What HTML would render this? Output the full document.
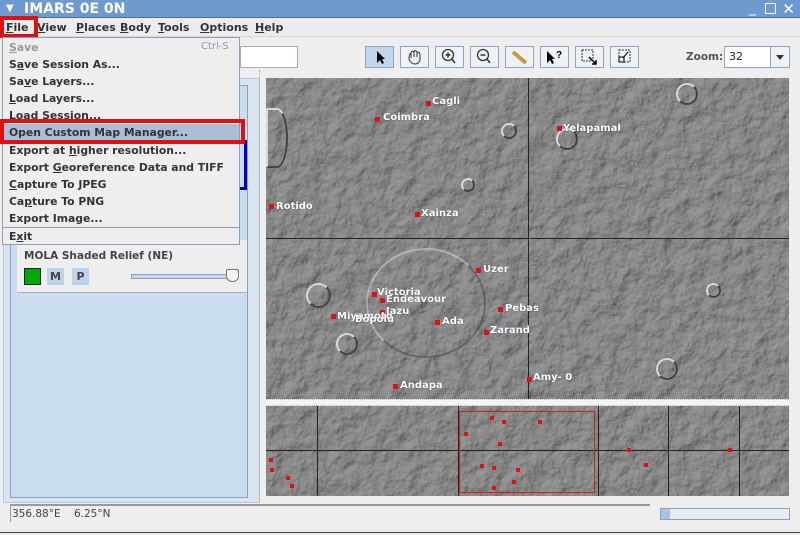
<!DOCTYPE html>
<html><head><meta charset="utf-8"><style>
*{margin:0;padding:0;box-sizing:border-box}
body{width:800px;height:535px;overflow:hidden;background:#eeeeee;font-family:"DejaVu Sans","Liberation Sans",sans-serif;font-size:11px;position:relative;color:#222}
.abs{position:absolute}
.title{left:0;top:0;width:800px;height:18px;background:#6f9ad0;color:#fff;font-weight:bold;font-size:14px;line-height:18px;padding-left:24px;border-bottom:1px solid #4a6e9c}
.menubar{left:0;top:18px;width:800px;height:19px;background:#ececec;border-bottom:1px solid #d8d8d8}
.menubar span{position:absolute;top:3px;font-weight:bold;color:#333;font-size:11px}
.menu{left:2px;top:37px;width:238px;height:208px;background:#eeeeee;border:1px solid #8aa0bd}
.mi{position:absolute;left:6px;font-weight:bold;font-size:10.8px;color:#333}
.map{background:#8e8e8e;overflow:hidden}
.lbl{position:absolute;color:#fff;font-weight:bold;font-size:10px;text-shadow:0 0 1px #333}
.dot{position:absolute;width:5px;height:5px;background:#e01010}
.crater{position:absolute;border-radius:50%;border:2px solid #d8d8d8;border-right-color:#444;border-bottom-color:#444}
.tb{position:absolute;top:46px;width:29px;height:22px;border:1px solid #8ea6c2;background:#eef2f6}
.tex{position:absolute;left:0;top:0}
</style></head><body>
<div class="abs title"><span style="position:absolute;left:6px;top:0;font-size:10px">▼</span>IMARS 0E 0N
<span style="position:absolute;right:44px;top:-1px;font-weight:normal">_</span>
<span style="position:absolute;right:24px;top:3px;width:11px;height:11px;border:1.5px solid #fff"></span>
<span style="position:absolute;right:5px;top:0;font-weight:normal;font-size:15px">✕</span></div>
<div class="abs menubar">
<span style="left:6px"><u>F</u>ile</span><span style="left:37px"><u>V</u>iew</span><span style="left:76px"><u>P</u>laces</span><span style="left:120px"><u>B</u>ody</span><span style="left:158px"><u>T</u>ools</span><span style="left:200px"><u>O</u>ptions</span><span style="left:255px"><u>H</u>elp</span>
</div>
<div class="abs" style="left:0;top:16px;width:38px;height:22px;border:4px solid #e01010"></div>
<div class="abs" style="left:240px;top:46px;width:58px;height:22px;background:#fff;border:1px solid #aab"></div>
<div class="tb" style="left:365px;background:#c2d6ec">
<svg width="27" height="20"><path d="M11 4 L11 16 L14 13 L16 17 L18 16 L16 12 L19 12 Z" fill="#000"/></svg></div>
<div class="tb" style="left:400px"><svg width="27" height="20"><path d="M8 12 Q8 7 10 6 L10 11 M10 6 Q11 3 13 5 L13 10 M13 5 Q14 2 16 5 L16 10 M16 6 Q18 4 19 7 L19 13 Q18 17 14 17 Q10 17 8 12" fill="none" stroke="#333" stroke-width="1"/></svg></div>
<div class="tb" style="left:435px"><svg width="27" height="20"><circle cx="12" cy="8" r="5.5" fill="none" stroke="#333" stroke-width="1.3"/><path d="M9.5 8H14.5M12 5.5V10.5M16 12L19 16" stroke="#333" stroke-width="1.5"/></svg></div>
<div class="tb" style="left:470px"><svg width="27" height="20"><circle cx="12" cy="8" r="5.5" fill="none" stroke="#333" stroke-width="1.3"/><path d="M9.5 8H14.5M16 12L19 16" stroke="#333" stroke-width="1.5"/></svg></div>
<div class="tb" style="left:505px"><svg width="27" height="20"><path d="M7 5 L20 16" stroke="#c89a3a" stroke-width="4"/></svg></div>
<div class="tb" style="left:540px"><svg width="27" height="20"><path d="M6 4 L6 16 L9 13 L11 17 L13 16 L11 12 L14 12 Z" fill="#000"/><text x="15" y="11" font-size="10" font-weight="bold" font-family="Liberation Sans">?</text></svg></div>
<div class="tb" style="left:575px"><svg width="27" height="20"><rect x="6" y="3" width="11" height="11" fill="none" stroke="#333" stroke-dasharray="2 1"/><path d="M13 10 L20 17 M20 13V17H16" stroke="#000" stroke-width="1.5" fill="none"/></svg></div>
<div class="tb" style="left:610px"><svg width="27" height="20"><rect x="8" y="3" width="11" height="12" fill="none" stroke="#333" stroke-dasharray="2 1"/><rect x="8" y="10" width="5" height="5" fill="none" stroke="#000"/><path d="M12 11 L17 5" stroke="#000"/></svg></div>
<div class="abs" style="left:686px;top:51px;font-weight:bold;font-size:10.5px;color:#555">Zoom:</div>
<div class="abs" style="left:724px;top:46px;width:66px;height:22px;background:#fff;border:1px solid #8ea6c2;font-size:11px;padding:3px 0 0 4px">32
<div style="position:absolute;right:0;top:0;width:19px;height:20px;border-left:1px solid #8ea6c2;background:#eef2f6"><div style="position:absolute;left:5px;top:8px;border:4px solid transparent;border-top:5px solid #333"></div></div></div>
<div class="abs" style="left:3px;top:78px;width:257px;height:425px;background:#d8e4f0;border:1px solid #b8c8d8"></div>
<div class="abs" style="left:10px;top:85px;width:238px;height:413px;background:#c9dcf0;border:1px solid #8aa0bd"></div>
<div class="abs" style="left:17px;top:140px;width:230px;height:50px;border:3px solid #0000cc;border-top:none;border-left:none"></div>
<div class="abs" style="left:17px;top:240px;width:230px;height:53px;background:#eeeeee;border-bottom:1px solid #a0b0c0"></div>
<div class="abs" style="left:24px;top:250px;font-weight:bold;font-size:10.5px;color:#444">MOLA Shaded Relief (NE)</div>
<div class="abs" style="left:24px;top:268px;width:17px;height:17px;background:#0a0;border:1px solid #222"></div>
<div class="abs" style="left:47px;top:268px;width:17px;height:17px;background:#bcd2e8;font-weight:bold;text-align:center;line-height:17px;color:#444">M</div>
<div class="abs" style="left:72px;top:268px;width:17px;height:17px;background:#bcd2e8;font-weight:bold;text-align:center;line-height:17px;color:#444">P</div>
<div class="abs" style="left:131px;top:274px;width:104px;height:5px;background:#c4d6ea;border:1px solid #8aa0bd"></div>
<div class="abs" style="left:226px;top:269px;width:13px;height:13px;background:#f4f4f4;border:1px solid #777;border-radius:2px 2px 6px 6px"></div>
<div class="abs" style="left:259px;top:70px;width:4px;height:430px;border-left:1px dotted #aaa"></div>
<svg width="0" height="0" style="position:absolute"><defs>
<filter id="relief" x="0" y="0" width="100%" height="100%">
<feTurbulence type="fractalNoise" baseFrequency="0.06" numOctaves="4" seed="3" result="n"/>
<feDiffuseLighting in="n" surfaceScale="3" lighting-color="#9a9a9a" result="l"><feDistantLight azimuth="225" elevation="50"/></feDiffuseLighting>
</filter></defs></svg>
<div class="abs map" style="left:266px;top:78px;width:523px;height:321px">
<svg class="tex" width="523" height="321"><rect width="523" height="321" filter="url(#relief)"/></svg>
<div class="abs" style="left:262px;top:0;width:1px;height:321px;background:#222"></div>
<div class="abs" style="left:0;top:160px;width:523px;height:1px;background:#222"></div>
<div class="crater" style="left:0;top:30px;width:22px;height:60px;border-radius:0 50% 50% 0"></div>
<div class="crater" style="left:40px;top:205px;width:25px;height:25px"></div>
<div class="crater" style="left:70px;top:255px;width:22px;height:22px"></div>
<div class="crater" style="left:290px;top:50px;width:22px;height:22px"></div>
<div class="crater" style="left:410px;top:5px;width:22px;height:22px"></div>
<div class="crater" style="left:390px;top:280px;width:22px;height:22px"></div>
<div class="crater" style="left:235px;top:45px;width:16px;height:16px"></div>
<div class="crater" style="left:100px;top:170px;width:120px;height:110px;border-width:2px;opacity:.5"></div>
<div class="crater" style="left:440px;top:205px;width:15px;height:15px"></div>
<div class="crater" style="left:195px;top:100px;width:14px;height:14px"></div>
</div>
<div class="dot" style="left:426px;top:101px"></div><div class="lbl" style="left:432px;top:96px">Cagli</div>
<div class="dot" style="left:375px;top:117px"></div><div class="lbl" style="left:383px;top:112px">Coimbra</div>
<div class="dot" style="left:557px;top:126px"></div><div class="lbl" style="left:563px;top:123px">Yelapamal</div>
<div class="dot" style="left:269px;top:204px"></div><div class="lbl" style="left:276px;top:201px">Rotido</div>
<div class="dot" style="left:415px;top:212px"></div><div class="lbl" style="left:421px;top:208px">Xainza</div>
<div class="dot" style="left:476px;top:268px"></div><div class="lbl" style="left:483px;top:264px">Uzer</div>
<div class="dot" style="left:372px;top:292px"></div><div class="lbl" style="left:377px;top:287px">Victoria</div>
<div class="dot" style="left:380px;top:298px"></div><div class="lbl" style="left:386px;top:294px">Endeavour</div>
<div class="dot" style="left:380px;top:310px"></div><div class="lbl" style="left:386px;top:306px">Iazu</div>
<div class="dot" style="left:331px;top:314px"></div><div class="lbl" style="left:337px;top:311px">Miyamoto</div>
<div class="lbl" style="left:355px;top:314px">Bopolu</div>
<div class="dot" style="left:498px;top:307px"></div><div class="lbl" style="left:505px;top:303px">Pebas</div>
<div class="dot" style="left:435px;top:320px"></div><div class="lbl" style="left:442px;top:316px">Ada</div>
<div class="dot" style="left:484px;top:330px"></div><div class="lbl" style="left:490px;top:325px">Zarand</div>
<div class="dot" style="left:527px;top:377px"></div><div class="lbl" style="left:533px;top:372px">Amy- 0</div>
<div class="dot" style="left:393px;top:384px"></div><div class="lbl" style="left:400px;top:380px">Andapa</div>
<div class="abs" style="left:266px;top:399px;width:523px;height:7px;border-top:1px dotted #bbb;border-bottom:1px dotted #bbb;background:#f4f4f4"></div>
<div class="abs map" style="left:266px;top:406px;width:523px;height:90px">
<svg class="tex" width="523" height="90"><rect width="523" height="90" filter="url(#relief)"/></svg>
<div class="abs" style="left:51px;top:0;width:1px;height:90px;background:#222"></div>
<div class="abs" style="left:192px;top:0;width:1px;height:90px;background:#222"></div>
<div class="abs" style="left:332px;top:0;width:1px;height:90px;background:#222"></div>
<div class="abs" style="left:402px;top:0;width:1px;height:90px;background:#222"></div>
<div class="abs" style="left:473px;top:0;width:1px;height:90px;background:#222"></div>
<div class="abs" style="left:0;top:44px;width:523px;height:1px;background:#222"></div>
<div class="abs" style="left:193px;top:5px;width:136px;height:82px;border:1px solid #d02020"></div>
<div class="dot" style="left:3px;top:52px;width:4px;height:4px"></div><div class="dot" style="left:4px;top:62px;width:4px;height:4px"></div><div class="dot" style="left:20px;top:70px;width:4px;height:4px"></div><div class="dot" style="left:24px;top:78px;width:4px;height:4px"></div>
<div class="dot" style="left:224px;top:10px;width:4px;height:4px"></div><div class="dot" style="left:236px;top:14px;width:4px;height:4px"></div><div class="dot" style="left:198px;top:26px;width:4px;height:4px"></div><div class="dot" style="left:232px;top:36px;width:4px;height:4px"></div><div class="dot" style="left:214px;top:58px;width:4px;height:4px"></div><div class="dot" style="left:226px;top:60px;width:4px;height:4px"></div><div class="dot" style="left:250px;top:62px;width:4px;height:4px"></div><div class="dot" style="left:272px;top:14px;width:4px;height:4px"></div><div class="dot" style="left:226px;top:80px;width:4px;height:4px"></div><div class="dot" style="left:246px;top:74px;width:4px;height:4px"></div>
<div class="dot" style="left:361px;top:42px;width:4px;height:4px"></div><div class="dot" style="left:378px;top:57px;width:4px;height:4px"></div><div class="dot" style="left:462px;top:42px;width:4px;height:4px"></div>
</div>
<div class="abs" style="left:10px;top:504px;width:640px;height:18px;border-top:2px solid #999;border-left:1px solid #999"></div>
<div class="abs" style="left:12px;top:508px;font-size:10.5px;color:#444">356.88°E &nbsp;&nbsp;&nbsp;6.25°N</div>
<div class="abs" style="left:660px;top:508px;width:130px;height:12px;background:#e6ecf2;border:1px solid #8aa0bd"><div style="width:9px;height:10px;background:#a8c4e0"></div></div>
<div class="abs" style="left:0;top:532px;width:800px;height:3px;border-top:1px solid #444"></div>
<div class="abs menu">
<div class="mi" style="top:3px;color:#999"><u>S</u>ave</div><div class="mi" style="left:198px;top:3px;color:#999;font-weight:normal;font-size:10px">Ctrl-S</div>
<div class="mi" style="top:20px">S<u>a</u>ve Session As...</div>
<div class="mi" style="top:37px">Sa<u>v</u>e Layers...</div>
<div class="mi" style="top:54px"><u>L</u>oad Layers...</div>
<div class="mi" style="top:71px">Load Session...</div>
<div style="position:absolute;left:0;top:86px;width:236px;height:17px;background:#a9bfd8"></div>
<div class="mi" style="top:88px">Open Custom Map Manager...</div>
<div class="mi" style="top:106px">Export at <u>h</u>igher resolution...</div>
<div class="mi" style="top:123px">Export <u>G</u>eoreference Data and TIFF</div>
<div class="mi" style="top:140px"><u>C</u>apture To JPEG</div>
<div class="mi" style="top:157px">Ca<u>p</u>ture To PNG</div>
<div class="mi" style="top:174px">Export Image...</div>
<div style="position:absolute;left:0;top:189px;width:236px;height:1px;background:#99a"></div>
<div class="mi" style="top:192px">E<u>x</u>it</div>
</div>
<div class="abs" style="left:0;top:119px;width:245px;height:25px;border:4px solid #e01010"></div>
</body></html>
